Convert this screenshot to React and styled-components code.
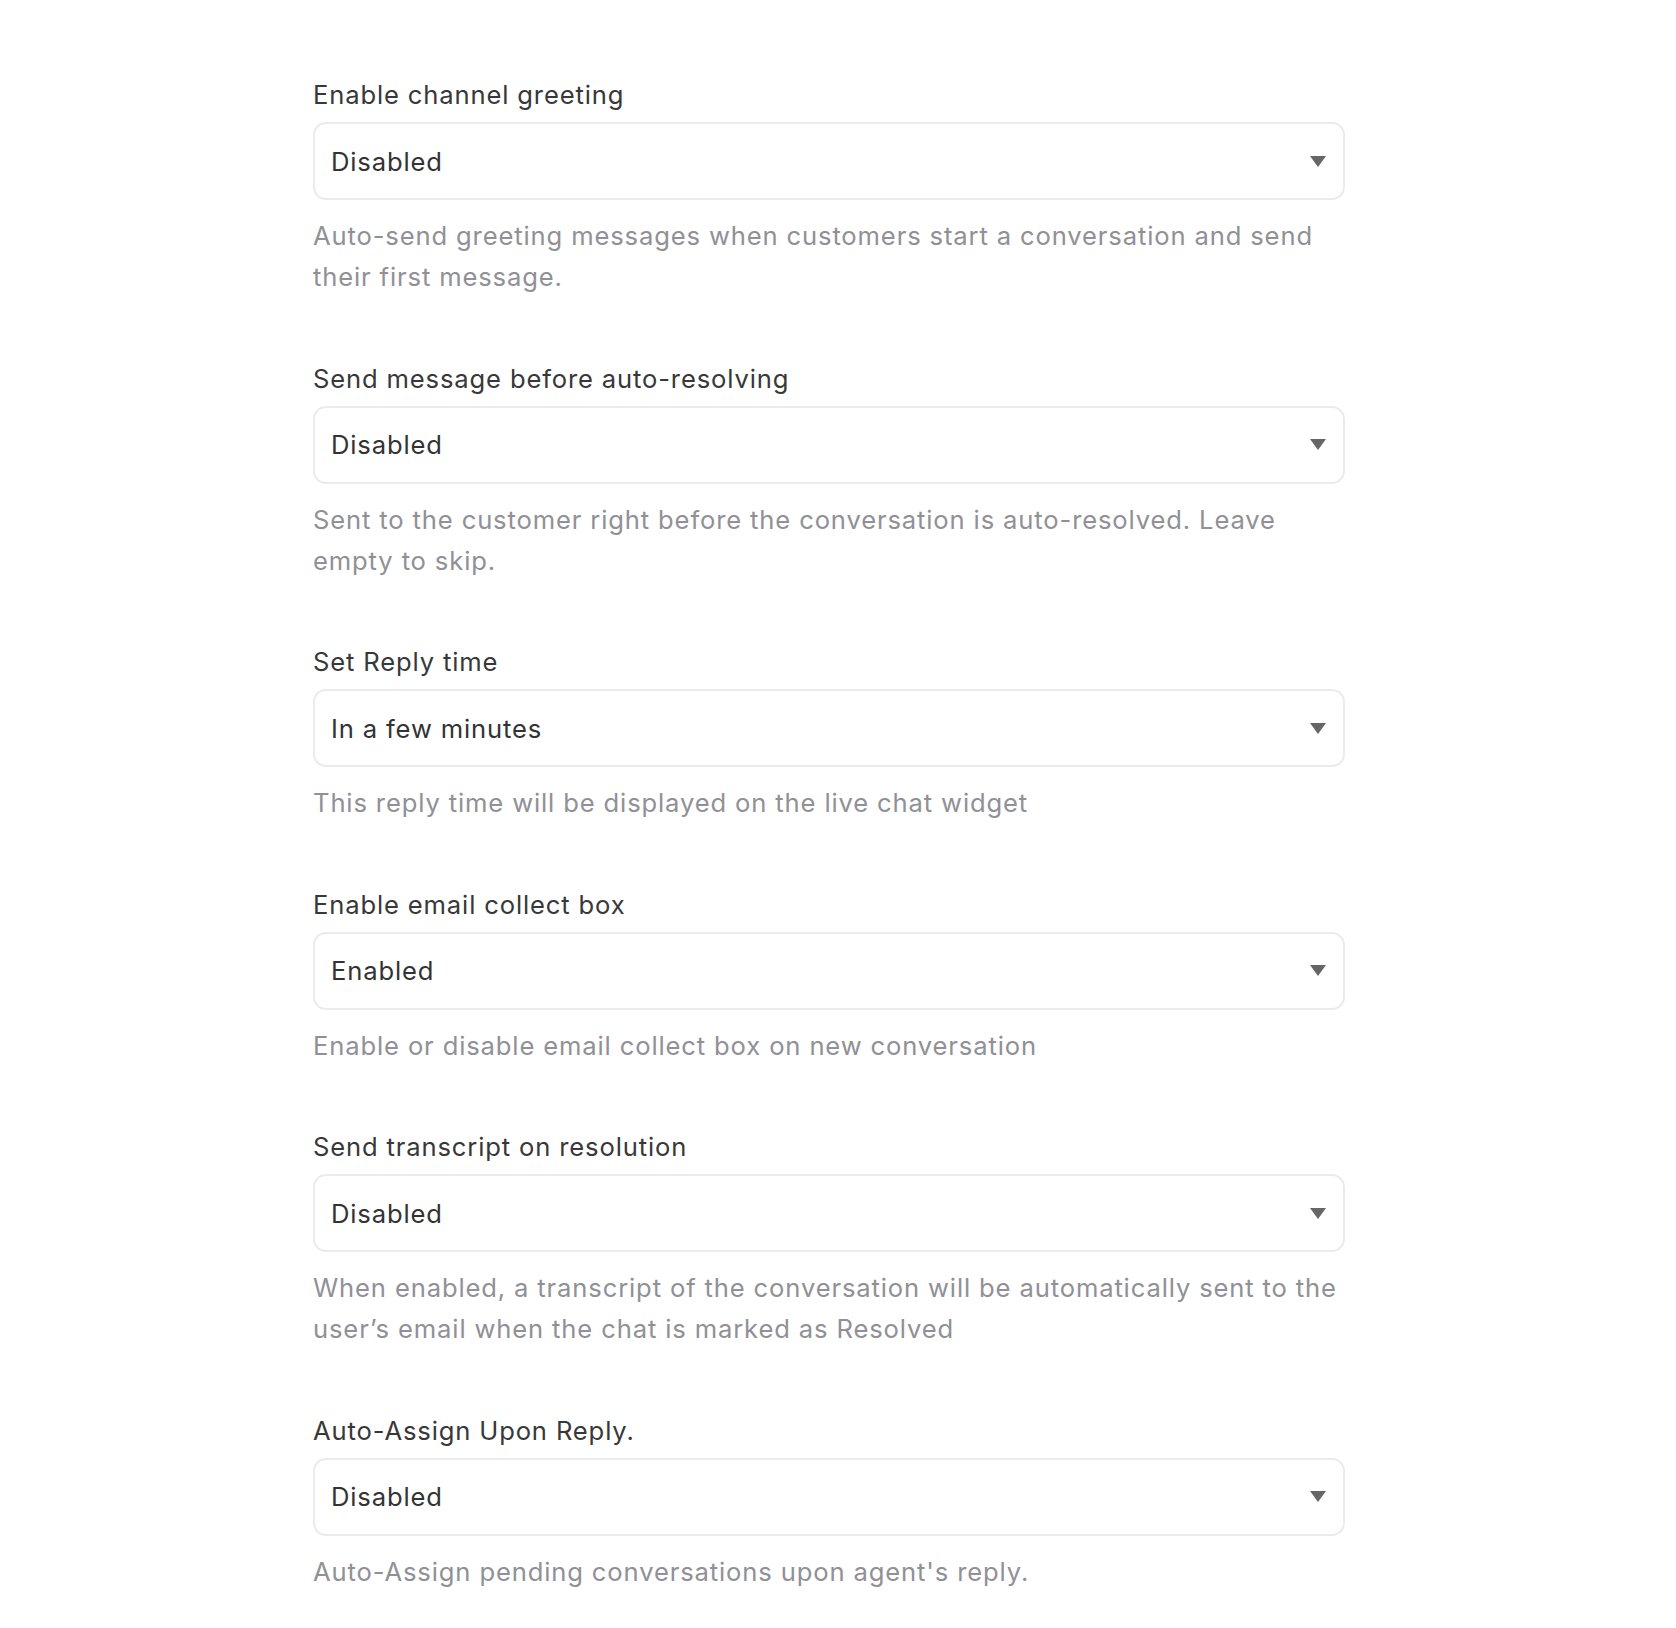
import React from "react";
import styled, { createGlobalStyle } from "styled-components";

const Global = createGlobalStyle`
  html, body { margin: 0; padding: 0; background: #ffffff; }
  body { font-family: Inter, "Noto Sans", sans-serif; -webkit-font-smoothing: antialiased; }
`;

const Page = styled.div`
  padding: 74px 0 36px 313px;
`;

const Form = styled.div`
  width: 1032px;
  display: flex;
  flex-direction: column;
  gap: 60.6px;
`;

const Field = styled.div`
  display: flex;
  flex-direction: column;
`;

const Label = styled.label`
  font-size: 25.6px;
  line-height: 41px;
  font-weight: 440;
  letter-spacing: 0.85px;
  color: #383838;
  margin-bottom: 7px;
`;

const SelectBox = styled.div`
  box-sizing: border-box;
  height: 78px;
  border: 2px solid #ebebeb;
  border-radius: 13px;
  display: flex;
  align-items: center;
  justify-content: space-between;
  padding: 0 17px 0 16px;
  font-size: 25.6px;
  letter-spacing: 0.85px;
  color: #333333;
  background: #fff;
`;

const Arrow = styled.svg`
  width: 16px;
  height: 11px;
  flex: none;
`;

const Help = styled.p`
  margin: 15px 0 0;
  font-size: 25.6px;
  line-height: 41px;
  letter-spacing: 0.86px;
  color: #909096;
`;

const fields = [
  {
    label: "Enable channel greeting",
    value: "Disabled",
    help: "Auto-send greeting messages when customers start a conversation and send their first message.",
  },
  {
    label: "Send message before auto-resolving",
    value: "Disabled",
    help: "Sent to the customer right before the conversation is auto-resolved. Leave empty to skip.",
  },
  {
    label: "Set Reply time",
    value: "In a few minutes",
    help: "This reply time will be displayed on the live chat widget",
  },
  {
    label: "Enable email collect box",
    value: "Enabled",
    help: "Enable or disable email collect box on new conversation",
  },
  {
    label: "Send transcript on resolution",
    value: "Disabled",
    help: "When enabled, a transcript of the conversation will be automatically sent to the user\u2019s email when the chat is marked as Resolved",
  },
  {
    label: "Auto-Assign Upon Reply.",
    value: "Disabled",
    help: "Auto-Assign pending conversations upon agent's reply.",
  },
];

export default function App() {
  return (
    <Page>
      <Global />
      <Form>
        {fields.map((f) => (
          <Field key={f.label}>
            <Label>{f.label}</Label>
            <SelectBox>
              <span>{f.value}</span>
              <Arrow viewBox="0 0 16 11">
                <path d="M0 0 H16 L8 11 Z" fill="#666666" />
              </Arrow>
            </SelectBox>
            <Help>{f.help}</Help>
          </Field>
        ))}
      </Form>
    </Page>
  );
}
